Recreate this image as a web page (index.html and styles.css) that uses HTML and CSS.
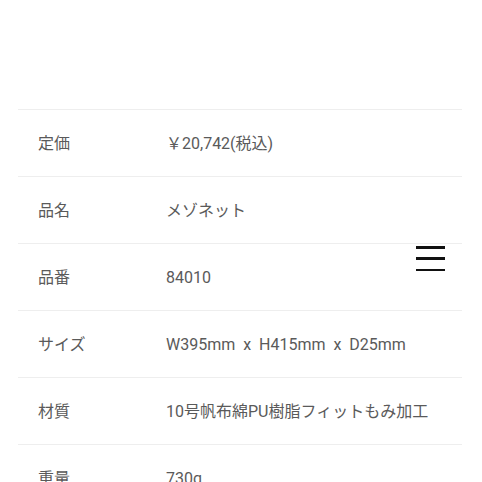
FILE: index.html
```html
<!DOCTYPE html>
<html lang="ja">
<head>
<meta charset="utf-8">
<link rel="stylesheet" href="styles.css">
</head>
<body>
<div class="page">
  <table class="spec">
    <colgroup><col class="col-label"><col></colgroup>
    <tr><th>定価</th><td>￥20,742(税込)</td></tr>
    <tr><th>品名</th><td>メゾネット</td></tr>
    <tr><th>品番</th><td>84010</td></tr>
    <tr><th>サイズ</th><td>W395mm&nbsp; x&nbsp; H415mm&nbsp; x&nbsp; D25mm</td></tr>
    <tr><th>材質</th><td>10号帆布綿PU樹脂フィットもみ加工</td></tr>
    <tr><th>重量</th><td>730g</td></tr>
  </table>
  <button class="menu" aria-label="menu"><span></span><span></span><span></span></button>
</div>
</body>
</html>
```
FILE: styles.css
```css
html, body {
  margin: 0;
  padding: 0;
  background: #fff;
  overflow: hidden;
}
.page {
  position: relative;
  width: 482px;
  height: 482px;
  padding-top: 109px;
  box-sizing: border-box;
  font-family: Roboto, "Noto Sans CJK JP", sans-serif;
  color: #5a5a5a;
  font-size: 16px;
}
.spec {
  margin: 0 20px 0 18px;
  width: 444px;
  border-collapse: collapse;
  table-layout: fixed;
}
.col-label {
  width: 148px;
}
.spec tr {
  border-top: 1px solid #eeeeee;
  height: 67px;
}
.spec th, .spec td {
  padding: 2px 0 0;
  font-weight: 400;
  text-align: left;
  vertical-align: middle;
  line-height: 20px;
  white-space: nowrap;
}
.spec th {
  padding-left: 20px;
}
.menu {
  position: absolute;
  left: 416px;
  top: 246px;
  width: 29px;
  height: 25px;
  padding: 0;
  border: 0;
  background: none;
  display: flex;
  flex-direction: column;
  justify-content: space-between;
}
.menu span {
  display: block;
  height: 2.5px;
  width: 29px;
  background: #111;
}
```
